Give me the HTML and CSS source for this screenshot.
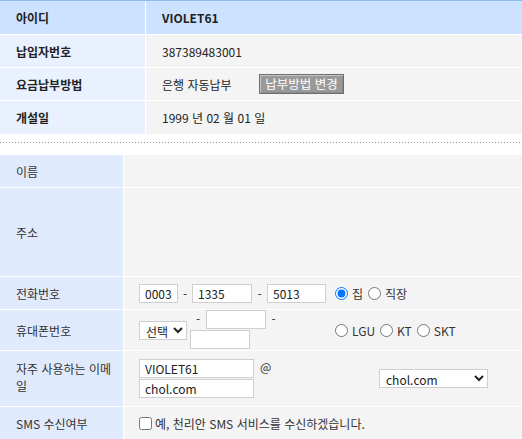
FILE: index.html
```html
<!DOCTYPE html>
<html lang="ko">
<head>
<meta charset="utf-8">
<title>회원정보</title>
<link rel="stylesheet" href="styles.css">
</head>
<body>
<div class="info">
  <div class="irow head"><div class="ik">아이디</div><div class="iv">VIOLET61</div></div>
  <div class="irow r32"><div class="ik">납입자번호</div><div class="iv">387389483001</div></div>
  <div class="irow r32"><div class="ik">요금납부방법</div><div class="iv"><span class="paytext">은행 자동납부</span><button class="paybtn" type="button">납부방법 변경</button></div></div>
  <div class="irow"><div class="ik">개설일</div><div class="iv">1999 년 02 월 01 일</div></div>
</div>
<div class="dots"></div>
<div class="form">
  <div class="frow h32"><div class="fk">이름</div><div class="fv"></div></div>
  <div class="frow h88"><div class="fk">주소</div><div class="fv"></div></div>
  <div class="frow h32">
    <div class="fk">전화번호</div>
    <div class="fv">
      <div class="fields">
        <input class="t w39" type="text" value="0003"><span class="dash d14">-</span><input class="t w60" type="text" value="1335"><span class="dash d15">-</span><input class="t w59" type="text" value="5013">
      </div>
      <div class="radios">
        <input class="rd" type="radio" name="tel" checked><span class="rl">집</span>
        <input class="rd" type="radio" name="tel"><span class="rl">직장</span>
      </div>
    </div>
  </div>
  <div class="frow h40">
    <div class="fk">휴대폰번호</div>
    <div class="fv">
      <div class="fields">
        <select class="sel w48"><option>선택</option></select>
        <div class="mob">
          <div class="mline"><span class="dash d16">-</span><input class="t w60" type="text" value=""><span class="dash d15">-</span></div>
          <div class="mline"><input class="t w60" type="text" value=""></div>
        </div>
      </div>
      <div class="radios">
        <input class="rd" type="radio" name="mob"><span class="rl">LGU</span>
        <input class="rd" type="radio" name="mob"><span class="rl">KT</span>
        <input class="rd" type="radio" name="mob"><span class="rl">SKT</span>
      </div>
    </div>
  </div>
  <div class="frow h55">
    <div class="fk wrap"><span class="wraptext">자주 사용하는 이메일</span></div>
    <div class="fv">
      <div class="email">
        <div class="estack">
          <input class="t w115" type="text" value="VIOLET61">
          <input class="t w115" type="text" value="chol.com">
        </div>
        <span class="at">@</span>
      </div>
      <select class="sel w109"><option>chol.com</option></select>
    </div>
  </div>
  <div class="frow h32">
    <div class="fk">SMS 수신여부</div>
    <div class="fv"><input class="cb" type="checkbox"><span>예, 천리안 SMS 서비스를 수신하겠습니다.</span></div>
  </div>
</div>
</body>
</html>
```
FILE: styles.css
```css
* { box-sizing: border-box; }
body {
  margin: 0;
  background: #fff;
  font-family: "Noto Sans CJK KR", "Noto Sans", sans-serif;
  font-size: 12px;
  color: #333;
  width: 522px;
}
.info {
  border-top: 1px solid #8dbcf1;
  display: flex;
  flex-direction: column;
  gap: 1px;
}
.irow {
  display: grid;
  grid-template-columns: 145px 1fr;
  column-gap: 1px;
  height: 33px;
}
.irow.r32 { height: 32px; }
.ik {
  background: #e8f1fd;
  font-weight: bold;
  color: #222;
  padding-left: 16px;
  display: flex;
  align-items: center;
}
.iv {
  background: #f4f4f4;
  padding-left: 16px;
  display: flex;
  align-items: center;
  color: #222;
}
.head .ik, .head .iv { background: #cce2ff; font-weight: bold; color: #222; }
.paytext { display: inline-block; width: 97px; }
.paybtn {
  font: inherit;
  font-size: 12.5px;
  color: #fff;
  background: #999;
  border: 1px solid #6e6e6e;
  box-shadow: inset 1px 1px 0 #c4c4c4, inset -1px -1px 0 #8a8a8a;
  height: 20px;
  width: 85px;
  padding: 0;
  line-height: 18px;
}
.dots {
  margin: 8px 0 12px;
  height: 1px;
  background-image: repeating-linear-gradient(to right, #9a9a9a 0 1px, transparent 1px 3px);
}
.form {
  display: flex;
  flex-direction: column;
  gap: 1px;
}
.frow {
  display: grid;
  grid-template-columns: 123px 1fr;
  column-gap: 1px;
}
.h32 { height: 32px; }
.h88 { height: 88px; }
.h40 { height: 40px; }
.h55 { height: 55px; }
.fk {
  background: #dfeafc;
  padding: 0 0 0 16px;
  display: flex;
  align-items: center;
  color: #333;
}
.fk.wrap { line-height: 17px; padding-bottom: 4px; }
.wraptext { display: block; width: 100px; }
.fv {
  background: #f4f4f4;
  padding-left: 15px;
  display: flex;
  align-items: center;
  color: #333;
}
.fields {
  width: 196px;
  display: flex;
  align-items: center;
}
.t {
  height: 19px;
  border: 1px solid #cfcfcf;
  background: #fff;
  padding: 0 0 0 5px;
  margin: 0;
  font: inherit;
  font-size: 12px;
  color: #222;
  outline: none;
}
.w39 { width: 39px; }
.w60 { width: 60px; }
.w59 { width: 59px; }
.w115 { width: 115px; }
.dash { display: inline-block; text-align: center; }
.d14 { width: 14px; }
.d15 { width: 15px; }
.d16 { width: 16px; }
.sel {
  height: 19px;
  border: 1px solid #cfcfcf;
  background: #fff;
  font: inherit;
  font-size: 12px;
  color: #222;
  margin: 0;
  padding: 0 0 0 2px;
  border-radius: 0;
}
.w48 { width: 48px; }
.w109 { width: 109px; }
.mob {
  margin-left: 3px;
  display: flex;
  flex-direction: column;
}
.mline {
  height: 20px;
  display: flex;
  align-items: flex-start;
}
.mline .dash { line-height: 18px; }
.radios {
  display: flex;
  align-items: center;
}
.rd {
  width: 13px;
  height: 13px;
  margin: 0 4px 0 0;
}
.rl { margin-right: 5px; }
.email {
  width: 240px;
  display: flex;
  align-items: flex-start;
}
.estack {
  display: flex;
  flex-direction: column;
  gap: 1px;
}
.at { margin-left: 6px; line-height: 16px; }
.cb {
  width: 13px;
  height: 13px;
  margin: 0 3px 0 0;
}
```
